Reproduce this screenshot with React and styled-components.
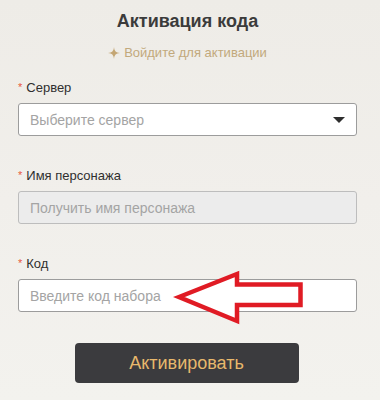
import React from "react";
import styled, { createGlobalStyle } from "styled-components";

const Global = createGlobalStyle`
  html, body { margin: 0; padding: 0; }
  body {
    width: 380px;
    height: 400px;
    overflow: hidden;
    font-family: "Liberation Sans", Arial, sans-serif;
    background: linear-gradient(180deg, #eeece7 0%, #f1efeb 50%, #f3f2ee 100%);
  }
`;

const Page = styled.div`
  width: 380px;
  height: 400px;
  box-sizing: border-box;
  padding: 9px 23px 0 18px;
  display: flex;
  flex-direction: column;
`;

const Title = styled.h1`
  margin: 0;
  font-size: 18px;
  line-height: 24px;
  font-weight: 700;
  color: #3b3b3b;
  text-align: center;
`;

const Subtitle = styled.div`
  margin-top: 10px;
  display: flex;
  justify-content: center;
  align-items: center;
  gap: 4px;
  font-size: 13px;
  line-height: 20px;
  color: #c2a97c;
`;

const Star = styled.svg`
  width: 12px;
  height: 12px;
  flex: none;
`;

const Form = styled.div`
  margin-top: 15px;
  display: flex;
  flex-direction: column;
  gap: 30px;
`;

const Field = styled.div`
  position: relative;
  display: flex;
  flex-direction: column;
  gap: 5px;
`;

const Label = styled.div`
  font-size: 13px;
  line-height: 20px;
  color: #2f2f2f;
  display: flex;
  align-items: baseline;
`;

const Req = styled.span`
  color: #e8583e;
  font-size: 11px;
  margin-right: 4px;
  position: relative;
  top: -1px;
`;

const Box = styled.div`
  position: relative;
  height: 33px;
  box-sizing: border-box;
  border: 1px solid ${(p) => (p.$disabled ? "#bdbdbd" : "#9c9c9c")};
  border-radius: 3px;
  background: ${(p) => (p.$disabled ? "#ececec" : "#ffffff")};
  display: flex;
  align-items: center;
  padding: 0 11px;
  font-size: 14px;
  color: #a4a4a4;
`;

const Caret = styled.span`
  margin-left: auto;
  width: 0;
  height: 0;
  border-left: 6px solid transparent;
  border-right: 6px solid transparent;
  border-top: 6px solid #2e2e2e;
`;

const ArrowMark = styled.svg`
  position: absolute;
  left: 155px;
  top: -10px;
  width: 150px;
  height: 55px;
  overflow: visible;
`;

const ButtonRow = styled.div`
  margin-top: 31px;
  display: flex;
  justify-content: center;
`;

const Button = styled.button`
  width: 224px;
  height: 40px;
  margin-left: -2px;
  border: none;
  border-radius: 4px;
  background: #3b3b3e;
  color: #e8b86c;
  font-family: "Liberation Sans", Arial, sans-serif;
  font-size: 18px;
  cursor: pointer;
`;

export default function App() {
  return (
    <>
      <Global />
      <Page>
        <Title>Активация кода</Title>
        <Subtitle>
          <Star viewBox="0 0 12 12">
            <path
              d="M6 0 C6.5 4.2 7.8 5.5 12 6 C7.8 6.5 6.5 7.8 6 12 C5.5 7.8 4.2 6.5 0 6 C4.2 5.5 5.5 4.2 6 0 Z"
              fill="#c4a674"
            />
          </Star>
          <span>Войдите для активации</span>
        </Subtitle>
        <Form>
          <Field>
            <Label>
              <Req>*</Req>Сервер
            </Label>
            <Box>
              Выберите сервер
              <Caret />
            </Box>
          </Field>
          <Field>
            <Label>
              <Req>*</Req>Имя персонажа
            </Label>
            <Box $disabled>Получить имя персонажа</Box>
          </Field>
          <Field>
            <Label>
              <Req>*</Req>Код
            </Label>
            <Box>
              Введите код набора
              <ArrowMark viewBox="173 270 150 55">
                <polygon
                  points="178,297 236,274 236,284.5 299.5,284.5 299.5,305 236,305 236,321"
                  fill="#ffffff"
                  stroke="#e01b24"
                  strokeWidth="4.5"
                  strokeLinejoin="miter"
                />
              </ArrowMark>
            </Box>
          </Field>
        </Form>
        <ButtonRow>
          <Button>Активировать</Button>
        </ButtonRow>
      </Page>
    </>
  );
}
